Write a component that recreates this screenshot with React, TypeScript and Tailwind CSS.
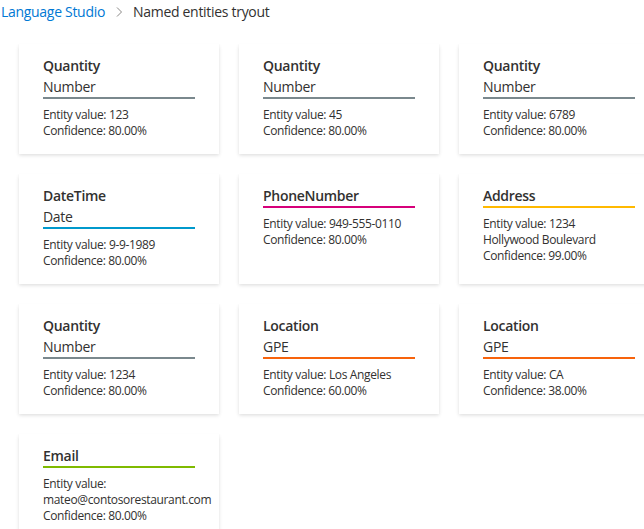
import React from "react";

type Entity = {
  category: string;
  subcategory?: string;
  lines: string[];
  confidence: string;
  color: string;
};

const entities: Entity[] = [
  { category: "Quantity", subcategory: "Number", lines: ["Entity value: 123"], confidence: "80.00%", color: "border-[#7a888d]" },
  { category: "Quantity", subcategory: "Number", lines: ["Entity value: 45"], confidence: "80.00%", color: "border-[#7a888d]" },
  { category: "Quantity", subcategory: "Number", lines: ["Entity value: 6789"], confidence: "80.00%", color: "border-[#7a888d]" },
  { category: "DateTime", subcategory: "Date", lines: ["Entity value: 9-9-1989"], confidence: "80.00%", color: "border-[#0099cc]" },
  { category: "PhoneNumber", lines: ["Entity value: 949-555-0110"], confidence: "80.00%", color: "border-[#d6007a]" },
  { category: "Address", lines: ["Entity value: 1234", "Hollywood Boulevard"], confidence: "99.00%", color: "border-[#ffb900]" },
  { category: "Quantity", subcategory: "Number", lines: ["Entity value: 1234"], confidence: "80.00%", color: "border-[#7a888d]" },
  { category: "Location", subcategory: "GPE", lines: ["Entity value: Los Angeles"], confidence: "60.00%", color: "border-[#f7630c]" },
  { category: "Location", subcategory: "GPE", lines: ["Entity value: CA"], confidence: "38.00%", color: "border-[#f7630c]" },
  { category: "Email", lines: ["Entity value:", "mateo@contosorestaurant.com"], confidence: "80.00%", color: "border-[#7fba00]" },
];

const EntityCard: React.FC<{ entity: Entity }> = ({ entity }) => (
  <div className="h-[110px] w-[200px] bg-white px-6 pt-[12px] shadow-[0_1.6px_3.6px_0_rgba(0,0,0,0.132),0_0.3px_0.9px_0_rgba(0,0,0,0.108)]">
    <div className={`border-b-2 ${entity.color}`}>
      <div className="text-[14px] font-semibold leading-[20px] tracking-[-0.3px] text-[#323130]">
        {entity.category}
      </div>
      {entity.subcategory && (
        <div className="mt-[1px] text-[14px] leading-[20px] tracking-[-0.3px] text-[#323130]">
          {entity.subcategory}
        </div>
      )}
    </div>
    <div className="mt-[8px] text-[12px] leading-[16px] tracking-[-0.35px] text-[#323130]">
      {entity.lines.map((line, i) => (
        <div key={i}>{line}</div>
      ))}
      <div>Confidence: {entity.confidence}</div>
    </div>
  </div>
);

export default function App() {
  return (
    <div className="h-[529px] w-full overflow-hidden bg-white font-['Segoe_UI','Open_Sans',sans-serif]">
      <nav className="flex h-[24px] items-center pl-[1px] text-[14px] leading-[20px] tracking-[-0.3px]">
        <span className="text-[#0078d4]">Language Studio</span>
        <svg
          className="mx-[8px] h-[12px] w-[12px] text-[#8a8886]"
          viewBox="0 0 12 12"
          fill="none"
          stroke="currentColor"
          strokeWidth="1"
        >
          <path d="M4 1.5 8.5 6 4 10.5" />
        </svg>
        <span className="text-[#323130]">Named entities tryout</span>
      </nav>
      <div className="grid w-max grid-cols-[repeat(3,200px)] gap-5 pl-[19px] pt-5">
        {entities.map((entity, i) => (
          <EntityCard key={i} entity={entity} />
        ))}
      </div>
    </div>
  );
}
